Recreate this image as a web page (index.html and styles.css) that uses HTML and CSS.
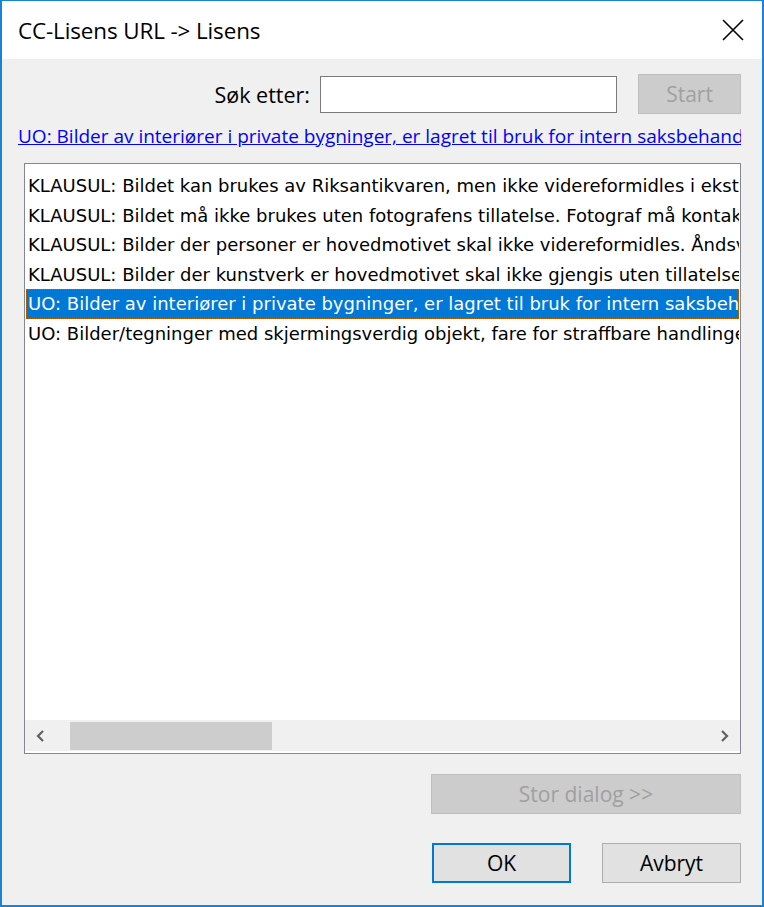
FILE: index.html
```html
<!DOCTYPE html>
<html lang="no">
<head>
    <meta charset="UTF-8">
    <title>CC-Lisens URL -&gt; Lisens</title>
    <link rel="stylesheet" href="styles.css">
</head>
<body>
    <div class="window">
        <div class="titlebar">
            <span class="title">CC-Lisens URL -&gt; Lisens</span>
            <svg class="close" width="24" height="24" viewBox="0 0 24 24">
                <path d="M2 2 L22 22 M22 2 L2 22" stroke="#000" stroke-width="1.6" fill="none"/>
            </svg>
        </div>

        <div class="content">
            <!-- search -->
            <div class="search-row">
                <label for="sok">Søk etter:</label>
                <input type="text" id="sok">
                <button class="btn btn-start" disabled>Start</button>
            </div>

            <a class="selected-link" href="#">UO: Bilder av interiører i private bygninger, er lagret til bruk for intern saksbehandling</a>

            <!-- list of licences -->
            <div class="listbox">
                <div class="list-rows">
                    <div class="item">KLAUSUL: Bildet kan brukes av Riksantikvaren, men ikke videreformidles i eksterne kanaler</div>
                    <div class="item">KLAUSUL: Bildet må ikke brukes uten fotografens tillatelse. Fotograf må kontaktes</div>
                    <div class="item">KLAUSUL: Bilder der personer er hovedmotivet skal ikke videreformidles. Åndsverk</div>
                    <div class="item">KLAUSUL: Bilder der kunstverk er hovedmotivet skal ikke gjengis uten tillatelse</div>
                    <div class="item selected">UO: Bilder av interiører i private bygninger, er lagret til bruk for intern saksbehandling</div>
                    <div class="item">UO: Bilder/tegninger med skjermingsverdig objekt, fare for straffbare handlinger</div>
                </div>
                <div class="hscroll">
                    <svg class="arrow" width="10" height="14" viewBox="0 0 10 14">
                        <path d="M7.5 2 L2.5 7 L7.5 12" stroke="#606060" stroke-width="2.2" fill="none"/>
                    </svg>
                    <div class="track">
                        <div class="thumb"></div>
                    </div>
                    <svg class="arrow" width="10" height="14" viewBox="0 0 10 14">
                        <path d="M2.5 2 L7.5 7 L2.5 12" stroke="#606060" stroke-width="2.2" fill="none"/>
                    </svg>
                </div>
            </div>

            <div class="stor-row">
                <button class="btn btn-stor" disabled>Stor dialog &gt;&gt;</button>
            </div>

            <div class="button-row">
                <button class="btn btn-ok">OK</button>
                <button class="btn">Avbryt</button>
            </div>
        </div>
    </div>
</body>
</html>
```

FILE: styles.css
```css
html, body {
    margin: 0;
    padding: 0;
}

body {
    width: 764px;
    height: 907px;
    font-family: "Open Sans", "Liberation Sans", sans-serif;
}

.window {
    box-sizing: border-box;
    width: 764px;
    height: 907px;
    border: 2px solid #1883d7;
    border-top-width: 1px;
    background-color: #f0f0f0;
    display: flex;
    flex-direction: column;
}

.titlebar {
    height: 58px;
    background-color: #fff;
    display: flex;
    align-items: center;
    justify-content: space-between;
    padding: 0 16px 0 16px;
    flex-shrink: 0;
}

.title {
    font-size: 22.4px;
    color: #000;
    letter-spacing: -0.1px;
}

.close {
    margin-right: 1px;
}

.content {
    flex: 1;
    display: flex;
    flex-direction: column;
    padding: 15px 21px 0 16px;
}

.search-row {
    display: flex;
    justify-content: flex-end;
    align-items: center;
    height: 40px;
}

.search-row label {
    font-size: 21.5px;
    margin-right: 10px;
}

.search-row input {
    box-sizing: border-box;
    width: 297px;
    height: 37px;
    border: 1px solid #7a7a7a;
    background: #fff;
    margin: 0 21px 0 0;
}

.btn {
    box-sizing: border-box;
    height: 40px;
    width: 139px;
    font-family: "Open Sans", "Liberation Sans", sans-serif;
    font-size: 21px;
    background-color: #e1e1e1;
    border: 1px solid #adadad;
    color: #000;
    padding: 0;
}

.btn-start {
    width: 103px;
    background-color: #cccccc;
    border-color: #bfbfbf;
    color: #a0a0a0;
}

.selected-link {
    display: block;
    margin-top: 8px;
    font-size: 19px;
    color: #0000ff;
    white-space: nowrap;
    overflow: hidden;
    line-height: 28px;
}

.listbox {
    box-sizing: border-box;
    margin: 13px 0 0 6px;
    height: 591px;
    border: 1px solid #828790;
    background-color: #fff;
    display: flex;
    flex-direction: column;
}

.list-rows {
    flex: 1;
    overflow: hidden;
    padding: 7px 1px 0 1px;
}

.item {
    height: 29.5px;
    line-height: 29.5px;
    padding-left: 2px;
    white-space: nowrap;
    overflow: hidden;
    font-family: "DejaVu Sans", sans-serif;
    font-size: 18px;
    color: #000;
}

.item.selected {
    box-sizing: border-box;
    background-color: #0078d7;
    color: #fff;
    outline: 1px dotted #c06000;
    outline-offset: -1px;
}

.hscroll {
    height: 31px;
    background-color: #f0f0f0;
    display: flex;
    align-items: center;
    flex-shrink: 0;
    margin-bottom: 2px;
}

.arrow {
    width: 31px;
    flex-shrink: 0;
}

.track {
    flex: 1;
    height: 28px;
}

.thumb {
    width: 202px;
    height: 100%;
    margin-left: 14px;
    background-color: #cdcdcd;
}

.stor-row {
    display: flex;
    justify-content: flex-end;
    margin-top: 20px;
}

.btn-stor {
    width: 310px;
    background-color: #cccccc;
    border-color: #bfbfbf;
    color: #a0a0a0;
}

.button-row {
    display: flex;
    justify-content: flex-end;
    gap: 31px;
    margin-top: 29px;
}

.btn-ok {
    border: 2px solid #0078d7;
}
```
